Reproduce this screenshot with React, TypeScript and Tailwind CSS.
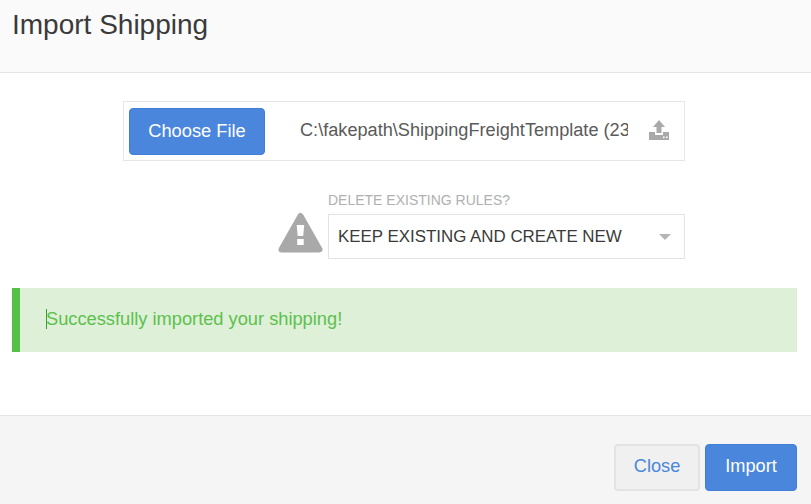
export default function App() {
  return (
    <div className="flex h-[504px] w-[811px] flex-col overflow-hidden bg-white font-['Liberation_Sans',Arial,sans-serif]">
      <header className="h-[73px] shrink-0 border-b border-[#e5e5e5] bg-[#fafafa] pl-3 pt-[7px]">
        <h1 className="text-[28px] leading-[36px] text-[#3a3a3a]">Import Shipping</h1>
      </header>
      <main className="flex flex-1 flex-col pt-7">
        <div className="ml-[123px] flex h-[60px] w-[562px] items-center border border-[#e6e6e6] pl-[5px] pr-[14px]">
          <button className="mt-px h-[47px] w-[136px] shrink-0 rounded border border-[#3f7fd6] bg-[#4a86dc] pb-[2px] text-[18.3px] text-white">
            Choose File
          </button>
          <span className="ml-[35px] w-[328px] overflow-hidden whitespace-nowrap pb-px text-[18.15px] text-[#5a5a5a]">
            C:\fakepath\ShippingFreightTemplate (23).csv
          </span>
          <svg className="mb-[3px] ml-auto" width="22" height="20" viewBox="0 0 22 20" fill="#a9a9a9">
            <path d="M11 0 L17 7 H13.5 V13 H8.5 V7 H5 Z" />
            <path d="M1 12 H7 V15 H15 V12 H21 V20 H1 Z" />
            <rect x="15" y="16.5" width="1.6" height="1.6" fill="#fff" />
            <rect x="18" y="16.5" width="1.6" height="1.6" fill="#fff" />
          </svg>
        </div>
        <div className="ml-[278px] mt-[31px] flex items-end">
          <svg className="mb-[6px] shrink-0" width="45" height="41" viewBox="0 0 45 41">
            <path d="M22.5 4 L41.5 37.5 H3.5 Z" fill="#a9a9a9" stroke="#a9a9a9" strokeWidth="6" strokeLinejoin="round" />
            <path d="M18.7 13 H26.2 L25.2 24 H19.7 Z" fill="#fff" />
            <rect x="19.2" y="27" width="6.5" height="6" fill="#fff" />
          </svg>
          <div className="ml-[5px] w-[357px]">
            <label className="block text-[14px] leading-[16px] text-[#b0b0b0]">DELETE EXISTING RULES?</label>
            <div className="mt-[6px] flex h-[45px] items-center justify-between border border-[#e3e3e3] pl-[9px] pr-[13px] text-[16.9px] text-[#3a3a3a]">
              <span>KEEP EXISTING AND CREATE NEW</span>
              <span className="h-0 w-0 border-x-[6px] border-t-[6px] border-x-transparent border-t-[#b5b5b5]" />
            </div>
          </div>
        </div>
        <div className="relative ml-3 mt-[29px] flex h-[64px] w-[785px] items-center border-l-8 border-[#54c045] bg-[#dff0d8] pb-[2px] pl-[26px] text-[18.25px] text-[#5cc04e]">
          Successfully imported your shipping!
          <span className="absolute left-[26px] top-[21px] h-[20px] w-px bg-[#2f9e3a]" />
        </div>
      </main>
      <footer className="flex h-[89px] shrink-0 items-start justify-end gap-[5px] border-t border-[#e5e5e5] bg-[#f5f5f5] pr-[14px] pt-[28px]">
        <button className="h-[47px] w-[86px] rounded border-2 border-[#e3e3e3] bg-[#f0f0f0] pb-[2px] text-[18.2px] text-[#4a86dc]">Close</button>
        <button className="h-[47px] w-[92px] rounded border border-[#3f7fd6] bg-[#4a86dc] pb-[2px] text-[18.2px] text-white">Import</button>
      </footer>
    </div>
  );
}
